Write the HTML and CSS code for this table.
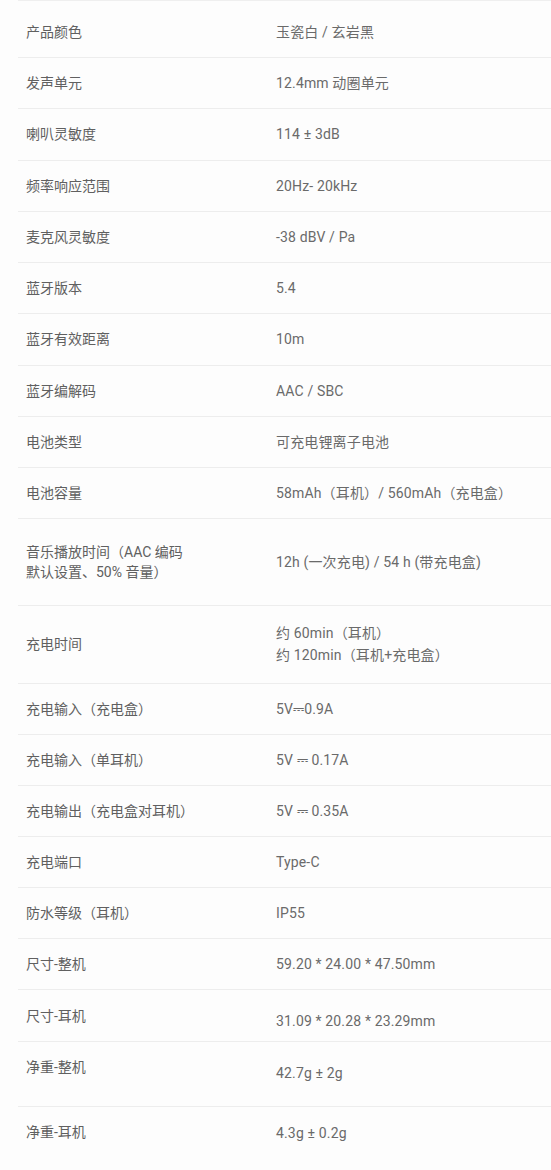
FILE: index.html
```html
<!DOCTYPE html>
<html lang="zh-CN">
<head>
<meta charset="utf-8">
<title>规格参数</title>
<link rel="stylesheet" href="styles.css">
</head>
<body>
<div class="specs">
  <div class="row row-first"><div class="label">产品颜色</div><div class="value">玉瓷白 / 玄岩黑</div></div>
  <div class="row"><div class="label">发声单元</div><div class="value">12.4mm 动圈单元</div></div>
  <div class="row row-plus"><div class="label">喇叭灵敏度</div><div class="value">114 ± 3dB</div></div>
  <div class="row"><div class="label">频率响应范围</div><div class="value">20Hz- 20kHz</div></div>
  <div class="row"><div class="label">麦克风灵敏度</div><div class="value">-38 dBV / Pa</div></div>
  <div class="row"><div class="label">蓝牙版本</div><div class="value">5.4</div></div>
  <div class="row row-plus"><div class="label">蓝牙有效距离</div><div class="value">10m</div></div>
  <div class="row"><div class="label">蓝牙编解码</div><div class="value">AAC / SBC</div></div>
  <div class="row"><div class="label">电池类型</div><div class="value">可充电锂离子电池</div></div>
  <div class="row"><div class="label">电池容量</div><div class="value">58mAh（耳机）/ 560mAh（充电盒）</div></div>
  <div class="row row-tall"><div class="label">音乐播放时间（AAC 编码<br>默认设置、50% 音量）</div><div class="value">12h (一次充电) / 54 h (带充电盒)</div></div>
  <div class="row row-two"><div class="label">充电时间</div><div class="value value-two">约 60min（耳机）<br>约 120min（耳机+充电盒）</div></div>
  <div class="row"><div class="label">充电输入（充电盒）</div><div class="value">5V⎓0.9A</div></div>
  <div class="row"><div class="label">充电输入（单耳机）</div><div class="value">5V ⎓ 0.17A</div></div>
  <div class="row"><div class="label">充电输出（充电盒对耳机）</div><div class="value">5V ⎓ 0.35A</div></div>
  <div class="row"><div class="label">充电端口</div><div class="value">Type-C</div></div>
  <div class="row"><div class="label">防水等级（耳机）</div><div class="value">IP55</div></div>
  <div class="row"><div class="label">尺寸-整机</div><div class="value">59.20 * 24.00 * 47.50mm</div></div>
  <div class="row row-top row-size"><div class="label">尺寸-耳机</div><div class="value value-low">31.09 * 20.28 * 23.29mm</div></div>
  <div class="row row-top row-weight"><div class="label">净重-整机</div><div class="value value-low">42.7g ± 2g</div></div>
  <div class="row row-top row-last"><div class="label">净重-耳机</div><div class="value value-slight">4.3g ± 0.2g</div></div>
</div>
</body>
</html>
```

FILE: styles.css
```css
html, body {
  margin: 0;
  padding: 0;
  background: #fdfdfd;
}

body {
  font-family: "Roboto", "Noto Sans CJK SC", sans-serif;
  font-size: 14px;
  color: #626262;
  width: 551px;
  overflow: hidden;
}

.specs {
  margin-left: 18px;
  border-top: 1px solid #efefef;
}

.row {
  display: grid;
  grid-template-columns: 250px 1fr;
  align-items: center;
  padding: 15px 0 15px 8px;
  border-bottom: 1px solid #ededed;
  line-height: 20px;
}

.row-first {
  padding-top: 21px;
}

.row-plus {
  padding-bottom: 16px;
}

.label {
  color: #606060;
}

.value {
  color: #6a6a6a;
  letter-spacing: 0.15px;
}

.row-tall {
  padding: 23px 0 23px 8px;
}

.row-two {
  padding: 16px 0 17px 8px;
}

.value-two {
  line-height: 22px;
}

.row-top {
  align-items: start;
  padding-top: 0;
  padding-bottom: 0;
}

.row-top .label {
  padding-top: 16px;
}

.row-size {
  height: 51px;
}

.row-size .value-low {
  padding-top: 21px;
}

.row-weight {
  height: 64px;
}

.row-weight .label {
  padding-top: 15px;
}

.row-weight .value-low {
  padding-top: 21px;
}

.row-last {
  height: 70px;
  border-bottom: none;
}

.row-last .label {
  padding-top: 15px;
}

.value-slight {
  padding-top: 16px;
}
```
